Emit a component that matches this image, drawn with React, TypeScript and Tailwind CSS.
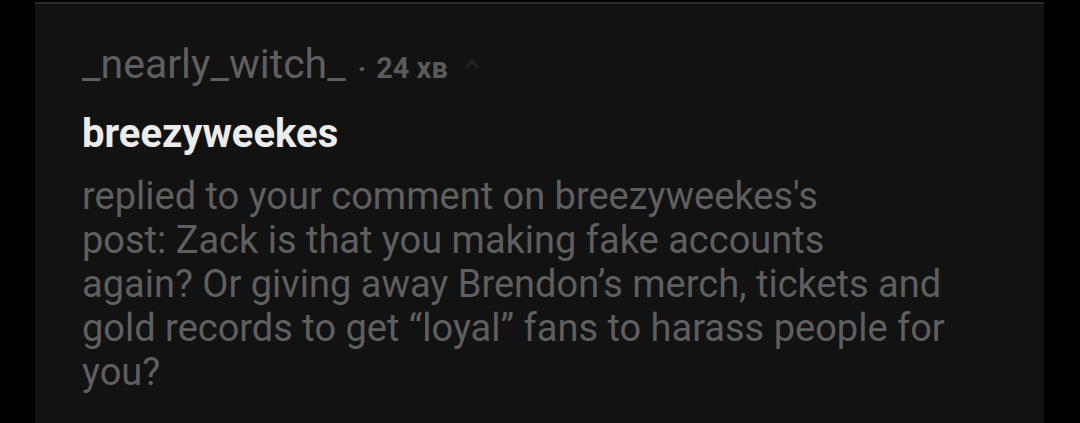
import React from "react";

export default function App() {
  return (
    <div className="w-[1080px] h-[423px] bg-black overflow-hidden" style={{ fontFamily: "Roboto, 'Noto Sans', sans-serif" }}>
      <div className="ml-[35px] w-[1009px] h-[423px] pt-[2px]">
        <div className="h-[2px] bg-[#2a2a2a]" />
        <div className="h-[419px] bg-[#121212] pl-[47px] pt-[38px]">
          <div className="flex items-baseline h-[44px] leading-[44px]">
            <span className="text-[41px] text-[#5f5f5f]">_nearly_witch_</span>
            <span className="ml-[12px] text-[28px] text-[#5a5a5a] font-bold">·</span>
            <span className="ml-[10px] text-[29px] text-[#5a5a5a] font-bold">24 хв</span>
            <svg className="ml-[16px] self-center" width="16" height="12" viewBox="0 0 16 12" fill="none">
              <path d="M2 10 L8 3 L14 10" stroke="#242424" strokeWidth="2.5" />
            </svg>
          </div>
          <div className="mt-[26px] text-[40px] font-bold text-[#ececec] leading-[44px]">breezyweekes</div>
          <div className="mt-[18px] text-[38px] text-[#5f5f5f] leading-[44px] whitespace-nowrap">
            replied to your comment on breezyweekes's<br />
            post: Zack is that you making fake accounts<br />
            again? Or giving away Brendon’s merch, tickets and<br />
            gold records to get “loyal” fans to harass people for<br />
            you?
          </div>
        </div>
      </div>
    </div>
  );
}
